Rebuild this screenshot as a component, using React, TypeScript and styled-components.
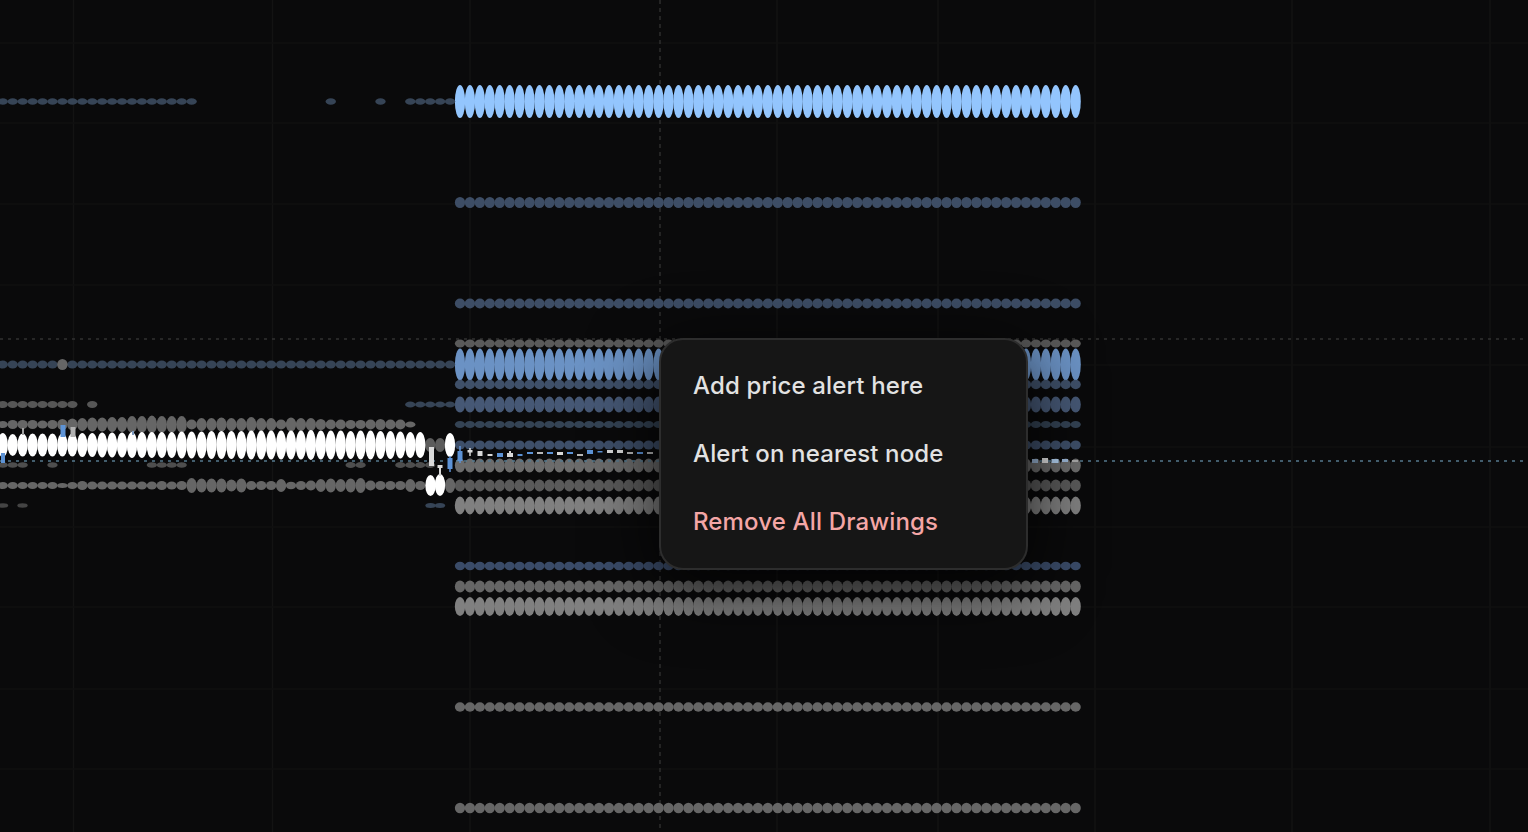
import React from 'react';
import styled, {createGlobalStyle} from 'styled-components';

type Dot = { x: number, y: number, ry: number, color: string }
type Candle = { x: number, y: number, w: number, h: number, color: string }

const BLUE = '#93c5fd'
const MID_BLUE = '#6b92c4'
const SLATE = '#3d4d65'
const DIM_SLATE = '#364456'
const GRAY = '#666666'
const LIGHT_GRAY = '#808080'
const WHITE = '#ffffff'

const STEP = 9.93
const LEFT_STEP = 9.94
const rightX = (i: number) => 460 + i * STEP
const leftX = (k: number) => 460 - k * LEFT_STEP

// full width rows on the right part of the chart
const rightRows = [
    {y: 101.5, ry: 16.5, color: BLUE},
    {y: 202.5, ry: 5.5, color: SLATE},
    {y: 303.5, ry: 5, color: SLATE},
    {y: 343.5, ry: 4, color: '#5a5a5a'},
    {y: 364.5, ry: 16, color: MID_BLUE},
    {y: 384.5, ry: 4.7, color: '#3f5069'},
    {y: 404.5, ry: 8, color: '#465875'},
    {y: 424.5, ry: 3.5, color: '#344354'},
    {y: 445, ry: 4.5, color: '#3e4f69'},
    {y: 465.5, ry: 7, color: '#6c6c6c'},
    {y: 485.5, ry: 6, color: '#5a5a5a'},
    {y: 505.5, ry: 9, color: LIGHT_GRAY},
    {y: 566, ry: 4.2, color: '#3a4b68'},
    {y: 586.5, ry: 6, color: GRAY},
    {y: 606.5, ry: 9.5, color: LIGHT_GRAY},
    {y: 707, ry: 4.7, color: GRAY},
    {y: 808, ry: 5.3, color: GRAY},
]

const ry424 = [3.5, 4.5, 4.5, 4.5, 4, 4.5, 5.5, 6, 6.5, 7, 7, 7.5, 7.5, 8.5, 8.5, 9, 8.5, 8.5, 8.5, 5, 6.5, 6.5, 7, 6.5,
    6.5, 7.5, 6.5, 6.5, 5, 7, 6.5, 6.5, 5.5, 5, 5, 4.5, 4.5, 5, 5.5, 5, 5, 3]
const ry445 = [12, 11, 11.5, 11.5, 11.5, 11.5, 11.5, 11.5, 12, 12, 12.5, 12.5, 12.5, 13, 13, 13, 13, 13, 13.5, 13.5, 13.5, 14, 14, 14,
    14, 14.5, 14.5, 14.5, 14.5, 14.5, 14.5, 15, 14.5, 14.5, 14.5, 14, 14.5, 14.5, 14, 14, 13.5, 13, 13]
const ry485 = [3.5, 3.5, 3.5, 3.5, 3.5, 3.5, 2.5, 3.5, 4.5, 4, 4, 4, 4, 4, 4, 4, 4.5, 4, 4.5, 7.5, 7, 7, 7, 6,
    7, 4.5, 4.5, 4.5, 6.5, 3.8, 4.5, 5, 6.5, 7, 6.5, 7, 7.5, 5, 4.5, 4.5, 4.5, 6.5, 4.5]

const row = (ks: number[], y: number, ry: number, color: string): Dot[] =>
    ks.map(k => ({x: leftX(k), y, ry, color}))

const range = (from: number, to: number) => {
    const res: number[] = []
    for (let k = from; k >= to; k--) res.push(k)
    return res
}

const leftDots: Dot[] = [
    ...row(range(46, 27), 101.5, 3.2, DIM_SLATE),
    ...row([13, 8, 5, 4, 3, 2, 1], 101.5, 3.2, DIM_SLATE),
    ...row(range(46, 1), 364.5, 4, DIM_SLATE),
    {x: leftX(40), y: 364.5, ry: 5.5, color: GRAY},
    ...row([46, 45, 44, 43, 42, 41, 40, 39, 37], 404.5, 3.4, '#565656'),
    ...row([5, 4, 3, 2, 1], 404.5, 3, DIM_SLATE),
    ...ry424.map((ry, n) => ({x: leftX(46 - n), y: 424.5, ry, color: GRAY})),
    ...row([46, 45, 44, 41], 465, 2.8, '#4e4e4e'),
    ...row([31, 30, 29, 28], 465, 2.8, '#4e4e4e'),
    ...row([11, 10, 6, 5, 4, 3], 465, 3, '#4e4e4e'),
    ...ry485.map((ry, n) => ({x: leftX(46 - n), y: 485.5, ry, color: GRAY})),
    ...row([3, 2], 445, 7, '#5c5c5c'),
    {x: leftX(1), y: 485.5, ry: 7.5, color: GRAY},
    ...ry445.map((ry, n) => ({x: leftX(46 - n), y: 445, ry, color: WHITE})),
    {x: 450, y: 445, ry: 12, color: WHITE},
    {x: 430.5, y: 485.5, ry: 10.5, color: WHITE},
    {x: 440, y: 485, ry: 11, color: WHITE},
    {x: 3, y: 505.5, ry: 2.2, color: '#444'},
    {x: 22.5, y: 505.5, ry: 2.2, color: '#444'},
    {x: 430.5, y: 505.5, ry: 2.5, color: DIM_SLATE},
    {x: 440, y: 505.5, ry: 2.5, color: DIM_SLATE},
]

const PALE = '#d9d9d9'
const CANDLE_BLUE = '#5d93d6'

const candles: Candle[] = [
    {x: 3, y: 453, w: 4, h: 10, color: CANDLE_BLUE},
    {x: 23, y: 428, w: 2, h: 7, color: '#a0a0a0'},
    {x: 63, y: 425, w: 5, h: 12, color: CANDLE_BLUE},
    {x: 73, y: 427, w: 5, h: 10, color: '#b0b0b0'},
    {x: 133, y: 431, w: 2, h: 4, color: '#7f9cc0'},
    {x: 431.5, y: 447, w: 5, h: 19, color: PALE},
    {x: 440, y: 465, w: 5, h: 3, color: PALE},
    {x: 440, y: 465, w: 2, h: 11, color: PALE},
    {x: 450, y: 458, w: 5, h: 11, color: CANDLE_BLUE},
    {x: 450, y: 456, w: 1.5, h: 16, color: CANDLE_BLUE},
    {x: 460, y: 451, w: 5, h: 10, color: CANDLE_BLUE},
    {x: 460, y: 446, w: 1.5, h: 17, color: CANDLE_BLUE},
    {x: 470, y: 450, w: 5, h: 2.5, color: PALE},
    {x: 470, y: 448, w: 1.5, h: 8, color: PALE},
    {x: 480, y: 451, w: 5, h: 5, color: PALE},
    {x: 490, y: 454, w: 5, h: 2, color: PALE},
    {x: 500, y: 453, w: 6, h: 4, color: CANDLE_BLUE},
    {x: 510, y: 453, w: 6, h: 4, color: PALE},
    {x: 510, y: 451, w: 2, h: 3, color: PALE},
    {x: 520, y: 454, w: 5, h: 2, color: CANDLE_BLUE},
    {x: 530, y: 452, w: 6, h: 2, color: CANDLE_BLUE},
    {x: 540, y: 452, w: 6, h: 2, color: '#b8b8b8'},
    {x: 550, y: 452, w: 6, h: 2, color: CANDLE_BLUE},
    {x: 560, y: 452, w: 6, h: 3, color: PALE},
    {x: 570, y: 452, w: 6, h: 2, color: CANDLE_BLUE},
    {x: 580, y: 454, w: 6, h: 2, color: '#b8b8b8'},
    {x: 590, y: 450, w: 6, h: 4, color: CANDLE_BLUE},
    {x: 600, y: 451, w: 5, h: 1.5, color: CANDLE_BLUE},
    {x: 610, y: 450, w: 6, h: 3, color: PALE},
    {x: 620, y: 450, w: 6, h: 3, color: PALE},
    {x: 630, y: 452, w: 6, h: 2, color: '#b8b8b8'},
    {x: 640, y: 452, w: 6, h: 2, color: CANDLE_BLUE},
    {x: 650, y: 452, w: 6, h: 2, color: '#b8b8b8'},
    {x: 1035, y: 459, w: 6, h: 4, color: '#9db8d8'},
    {x: 1045, y: 458, w: 6, h: 5, color: '#e2e2e2'},
    {x: 1055, y: 459, w: 7, h: 4, color: '#b4d2f2'},
    {x: 1065, y: 459, w: 6, h: 3, color: '#9db8d8'},
    {x: 1075, y: 460, w: 6, h: 2, color: '#a8a8a8'},
]

const gridX = [73.5, 272.5, 470, 777, 938, 1095, 1292, 1490]
const gridY = [43, 123, 204, 285, 365, 447, 527, 607, 689, 769]

const PriceChart = () => {
    return (
        <ChartSvg viewBox="0 0 1528 832">
            {gridX.map(x => <line key={x} x1={x} x2={x} y1={0} y2={832} stroke="#131313" strokeWidth={1.5}/>)}
            {gridY.map(y => <line key={y} x1={0} x2={1528} y1={y} y2={y} stroke="#101011" strokeWidth={1.5}/>)}
            <line x1={660} x2={660} y1={0} y2={832} stroke="#2e2e2e" strokeWidth={1.5} strokeDasharray="4 4"/>
            <line x1={0} x2={1528} y1={339} y2={339} stroke="#323232" strokeWidth={1.5} strokeDasharray="3 5"/>

            {rightRows.map(r => Array.from({length: 63}).map((_, i) => (
                <ellipse key={r.y + '-' + i} cx={rightX(i)} cy={r.y} rx={5.15} ry={r.ry} fill={r.color}/>
            )))}
            {leftDots.map((d, i) => (
                <ellipse key={i} cx={d.x} cy={d.y} rx={5.15} ry={d.ry} fill={d.color}/>
            ))}

            <line x1={0} x2={1528} y1={461} y2={461} stroke="#55798f" strokeWidth={1.5} strokeDasharray="3 5"/>
            {candles.map((c, i) => (
                <rect key={i} x={c.x - c.w / 2} y={c.y} width={c.w} height={c.h} fill={c.color}/>
            ))}
        </ChartSvg>
    )
}

export default function App() {
    return (
        <Page>
            <GlobalStyle/>
            <PriceChart/>
            <ContextMenu>
                <MenuItem>Add price alert here</MenuItem>
                <MenuItem>Alert on nearest node</MenuItem>
                <MenuItem danger>Remove All Drawings</MenuItem>
            </ContextMenu>
        </Page>
    )
}

const GlobalStyle = createGlobalStyle`
  html, body {
    margin: 0;
    padding: 0;
    background-color: #0a0a0b;
  }
`

const Page = styled.div`
  position: relative;
  width: 1528px;
  height: 832px;
  overflow: hidden;
  background-color: #0a0a0b;
  font-family: Inter, "Liberation Sans", sans-serif;
`

const ChartSvg = styled.svg`
  display: block;
  width: 1528px;
  height: 832px;
`

const ContextMenu = styled.div`
  position: absolute;
  left: 659px;
  top: 338px;
  box-sizing: border-box;
  width: 368.5px;
  height: 232px;
  padding: 11px 32px;
  display: flex;
  flex-direction: column;
  background-color: #161616;
  border: 2px solid #2d2d2d;
  border-radius: 24px;
  box-shadow: 0 16px 70px rgba(0, 0, 0, 0.8);
`

const MenuItem = styled.div<{ danger?: boolean }>`
  height: 68px;
  display: flex;
  align-items: center;
  font-size: 24px;
  font-weight: 500;
  letter-spacing: 0.15px;
  color: ${props => props.danger ? '#f4a6a6' : '#e2e2e2'};
`
